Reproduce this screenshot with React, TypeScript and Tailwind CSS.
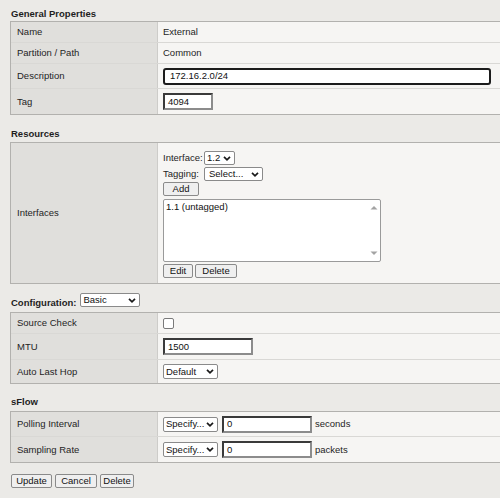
import React from "react";

function Chevron() {
  return (
    <svg width="8" height="5" viewBox="0 0 8 5" className="shrink-0">
      <path d="M1 0.8 L4 3.8 L7 0.8" fill="none" stroke="#1a1a1a" strokeWidth="1.7" />
    </svg>
  );
}

function Select({ text, className }: { text: string; className: string }) {
  return (
    <div
      className={`flex items-center justify-between border border-[#8a8a8a] rounded-[2px] bg-white pl-[2px] pr-[3px] leading-[12px] text-[#111] ${className}`}
    >
      <span>{text}</span>
      <Chevron />
    </div>
  );
}

function Btn({ text, className }: { text: string; className: string }) {
  return (
    <div
      className={`flex items-center justify-center h-[14px] border border-[#8a8a8a] rounded-[2px] bg-[#efefef] leading-[12px] text-[#111] ${className}`}
    >
      {text}
    </div>
  );
}

function Input({ value, className }: { value: string; className: string }) {
  return (
    <div
      className={`flex items-center bg-white border-2 border-t-[#3a3a3a] border-l-[#3a3a3a] border-b-[#8c8c8c] border-r-[#8c8c8c] pl-[3px] leading-[12px] text-[#111] ${className}`}
    >
      {value}
    </div>
  );
}

function Row({
  label,
  first,
  h,
  children,
}: {
  label: string;
  first?: boolean;
  h: string;
  children?: React.ReactNode;
}) {
  return (
    <div className={`flex ${first ? "" : "border-t border-[#d9d8d5]"} ${h}`}>
      <div className="w-[147px] shrink-0 bg-[#e0dfdc] border-r border-[#cdccc9] pl-[6px] flex items-center leading-[14px]">
        {label}
      </div>
      <div className="flex-1 bg-[#f6f5f3] pl-[5px] flex items-center gap-[4px]">{children}</div>
    </div>
  );
}

function Table({ children }: { children: React.ReactNode }) {
  return (
    <div className="ml-[10px] border-l border-t border-b border-[#b2b1ae] flex flex-col">{children}</div>
  );
}

export default function App() {
  return (
    <div className="w-[500px] h-[498px] overflow-hidden bg-[#ebeae7] text-[9.5px] text-[#1e1e1e] font-['Liberation_Sans',Arial,sans-serif]">
      <div className="h-[21px] pt-[7px] pl-[11px] font-bold leading-[14px]">General Properties</div>
      <Table>
        <Row label="Name" first h="h-[20px]">
          <span className="leading-[14px]">External</span>
        </Row>
        <Row label="Partition / Path" h="h-[21px]">
          <span className="leading-[14px]">Common</span>
        </Row>
        <Row label="Description" h="h-[25px]">
          <div className="w-[328px] h-[17px] bg-white border-2 border-[#1c1c1c] rounded-[3px] pl-[5px] flex items-center leading-[12px] text-[#111]">
            172.16.2.0/24
          </div>
        </Row>
        <Row label="Tag" h="h-[26px]">
          <Input value="4094" className="w-[50px] h-[17px]" />
        </Row>
      </Table>

      <div className="h-[27px] pt-[12px] pl-[11px] font-bold leading-[14px]">Resources</div>
      <Table>
        <div className="flex h-[140px]">
          <div className="w-[147px] shrink-0 bg-[#e0dfdc] border-r border-[#cdccc9] pl-[6px] flex items-center leading-[14px]">
            Interfaces
          </div>
          <div className="flex-1 bg-[#f6f5f3] pl-[5px] pt-[8px] flex flex-col items-start">
            <div className="flex items-center h-[14px]">
              <span className="w-[41px] leading-[14px]">Interface:</span>
              <Select text="1.2" className="w-[31px] h-[14px]" />
            </div>
            <div className="flex items-center h-[14px] mt-[2px]">
              <span className="w-[41px] leading-[14px]">Tagging:</span>
              <Select text="Select..." className="w-[59px] h-[14px] pl-[4px]" />
            </div>
            <Btn text="Add" className="w-[36px] mt-[1px]" />
            <div className="relative w-[218px] h-[63px] mt-[3px] bg-white border border-[#9a9a9a] rounded-[2px] pl-[2px] pt-[1px] leading-[12px] text-[#111]">
              1.1 (untagged)
              <svg width="8" height="5" viewBox="0 0 8 5" className="absolute right-[2px] top-[5px]">
                <path d="M0.5 4.5 L4 1 L7.5 4.5 Z" fill="#a3a3a3" />
              </svg>
              <svg width="8" height="5" viewBox="0 0 8 5" className="absolute right-[2px] bottom-[5px]">
                <path d="M0.5 0.5 L4 4 L7.5 0.5 Z" fill="#a3a3a3" />
              </svg>
            </div>
            <div className="flex gap-[2px] mt-[2px]">
              <Btn text="Edit" className="w-[30px]" />
              <Btn text="Delete" className="w-[42px]" />
            </div>
          </div>
        </div>
      </Table>

      <div className="h-[28px] pt-[9px] pl-[11px] flex items-start gap-[4px]">
        <span className="font-bold leading-[14px] pt-[3px]">Configuration:</span>
        <Select text="Basic" className="w-[60px] h-[14px] ml-[0px]" />
      </div>
      <Table>
        <Row label="Source Check" first h="h-[20px]">
          <div className="w-[11px] h-[11px] bg-white border border-[#7a7a7a] rounded-[2px]" />
        </Row>
        <Row label="MTU" h="h-[26px]">
          <Input value="1500" className="w-[90px] h-[17px]" />
        </Row>
        <Row label="Auto Last Hop" h="h-[24px]">
          <Select text="Default" className="w-[55px] h-[15px]" />
        </Row>
      </Table>

      <div className="h-[27px] pt-[11px] pl-[11px] font-bold leading-[14px]">sFlow</div>
      <Table>
        <Row label="Polling Interval" first h="h-[24px]">
          <Select text="Specify..." className="w-[55px] h-[15px]" />
          <Input value="0" className="w-[90px] h-[17px]" />
          <span className="leading-[14px] -ml-[1px]">seconds</span>
        </Row>
        <Row label="Sampling Rate" h="h-[26px]">
          <Select text="Specify..." className="w-[55px] h-[15px]" />
          <Input value="0" className="w-[90px] h-[17px]" />
          <span className="leading-[14px] -ml-[1px]">packets</span>
        </Row>
      </Table>

      <div className="flex gap-[3px] pl-[11px] mt-[11px]">
        <Btn text="Update" className="w-[41px]" />
        <Btn text="Cancel" className="w-[42px]" />
        <Btn text="Delete" className="w-[34px]" />
      </div>
    </div>
  );
}
